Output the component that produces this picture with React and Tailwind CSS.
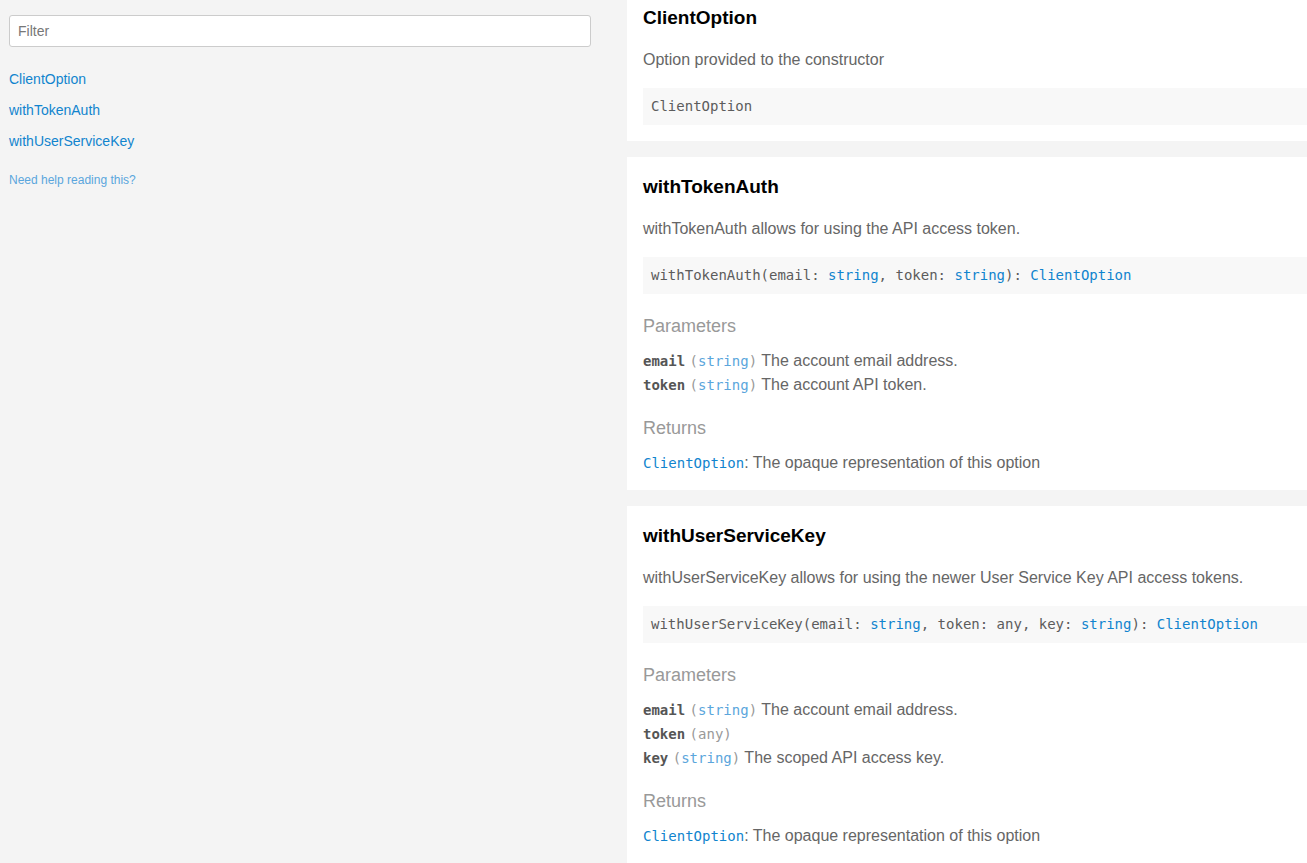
import React, { useState } from "react";

const sans = "font-['Liberation_Sans',Arial,sans-serif]";
const mono = "font-['DejaVu_Sans_Mono',monospace]";

const entries = [
  {
    name: "ClientOption",
    description: "Option provided to the constructor",
    signature: [{ t: "ClientOption" }],
  },
  {
    name: "withTokenAuth",
    description: "withTokenAuth allows for using the API access token.",
    signature: [
      { t: "withTokenAuth(email: " },
      { t: "string", link: true },
      { t: ", token: " },
      { t: "string", link: true },
      { t: "): " },
      { t: "ClientOption", link: true },
    ],
    params: [
      { name: "email", type: "string", link: true, desc: "The account email address." },
      { name: "token", type: "string", link: true, desc: "The account API token." },
    ],
    returns: "The opaque representation of this option",
  },
  {
    name: "withUserServiceKey",
    description:
      "withUserServiceKey allows for using the newer User Service Key API access tokens.",
    signature: [
      { t: "withUserServiceKey(email: " },
      { t: "string", link: true },
      { t: ", token: any, key: " },
      { t: "string", link: true },
      { t: "): " },
      { t: "ClientOption", link: true },
    ],
    params: [
      { name: "email", type: "string", link: true, desc: "The account email address." },
      { name: "token", type: "any", link: false, desc: "" },
      { name: "key", type: "string", link: true, desc: "The scoped API access key." },
    ],
    returns: "The opaque representation of this option",
  },
];

function Section({ entry, first }) {
  return (
    <section className={`bg-white pl-4 ${first ? "pt-[5px] pb-4" : "pt-[17px] pb-[15px]"}`}>
      <h3 className="text-[19px] leading-[26px] font-bold text-black">{entry.name}</h3>
      <p className="mt-[17px] text-base leading-6 text-[#666]">{entry.description}</p>
      <pre
        className={`mt-4 bg-[#f8f8f8] px-2 py-2 text-sm leading-[21px] text-[#5c5c5c] ${mono}`}
      >
        {entry.signature.map((s, i) =>
          s.link ? (
            <span key={i} className="text-[#1184ce]">
              {s.t}
            </span>
          ) : (
            <span key={i}>{s.t}</span>
          )
        )}
      </pre>

      {entry.params && (
        <>
          <h4 className="mt-5 text-lg leading-6 text-[#999]">Parameters</h4>
          <div className="mt-[11px]">
            {entry.params.map((p) => (
              <div key={p.name} className="text-base leading-6 text-[#666]">
                <span className={`text-sm font-bold text-[#555] ${mono}`}>{p.name}</span>{" "}
                <span className={`text-sm text-[#999] ${mono}`}>
                  (
                  <span className={p.link ? "text-[#5ba6dc]" : "text-[#999]"}>{p.type}</span>)
                </span>
                {p.desc && " " + p.desc}
              </div>
            ))}
          </div>
        </>
      )}

      {entry.returns && (
        <>
          <h4 className="mt-[19px] text-lg leading-6 text-[#999]">Returns</h4>
          <div className="mt-[11px] text-base leading-6 text-[#666]">
            <span className={`text-sm text-[#1184ce] ${mono}`}>ClientOption</span>: {entry.returns}
          </div>
        </>
      )}
    </section>
  );
}

export default function App() {
  const [filter, setFilter] = useState("");
  const shown = entries.filter((e) =>
    e.name.toLowerCase().includes(filter.toLowerCase())
  );

  return (
    <div className={`flex min-h-[863px] bg-[#f4f4f4] ${sans}`}>
      <aside className="w-[627px] shrink-0 pl-[9px] pr-9 pt-[15px]">
        <input
          value={filter}
          onChange={(e) => setFilter(e.target.value)}
          placeholder="Filter"
          className="block h-8 w-[582px] rounded-[3px] border border-[#ccc] bg-white px-2 text-sm text-[#333] placeholder-[#777] outline-none"
        />
        <ul className="mt-[17px]">
          {shown.map((e) => (
            <li key={e.name}>
              <a href={`#${e.name}`} className="block py-[5px] text-sm leading-[21px] text-[#1184ce]">
                {e.name}
              </a>
            </li>
          ))}
        </ul>
        <a href="#help" className="mt-[14px] block text-xs leading-[18px] text-[#5aa6dd]">
          Need help reading this?
        </a>
      </aside>

      <main className="flex min-w-0 flex-1 flex-col gap-4">
        {entries.map((e, i) => (
          <Section key={e.name} entry={e} first={i === 0} />
        ))}
      </main>
    </div>
  );
}
